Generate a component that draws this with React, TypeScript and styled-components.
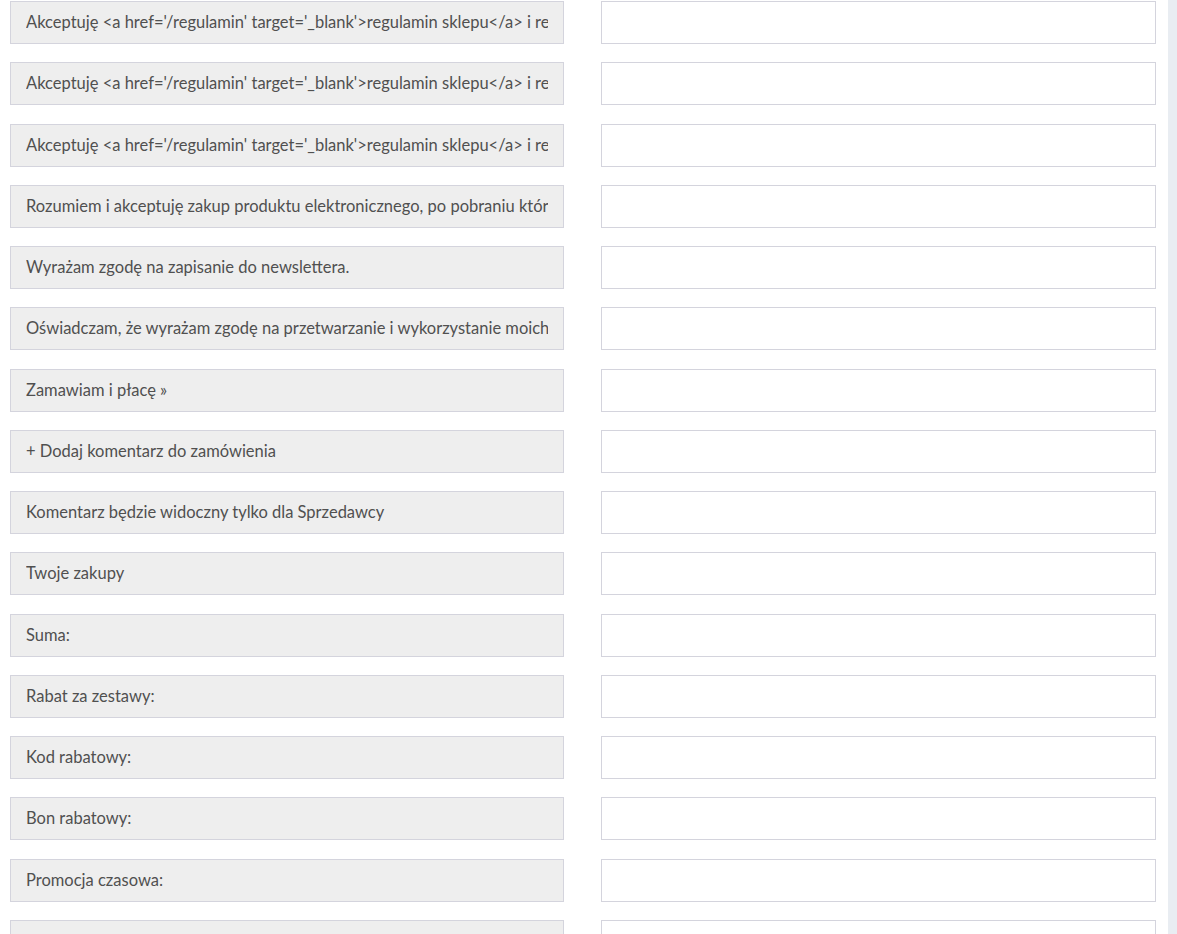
import { Fragment } from 'react';
import styled, { createGlobalStyle } from 'styled-components';

const GlobalStyle = createGlobalStyle`
  html, body {
    margin: 0;
    padding: 0;
    background: #ffffff;
    overflow: hidden;
  }
  body {
    font-family: Lato, "Open Sans", sans-serif;
  }
`;

const Page = styled.div`
  display: flex;
  width: 1177px;
  height: 934px;
  overflow: hidden;
`;

const Content = styled.div`
  flex: 1;
  padding: 1px 12px 0 10px;
  display: grid;
  grid-template-columns: 554px 555px;
  column-gap: 37px;
  row-gap: 18.27px;
  align-content: start;
`;

const ScrollStrip = styled.div`
  width: 9px;
  background-color: #e9edf2;
`;

const Label = styled.div`
  box-sizing: border-box;
  height: 43px;
  padding: 0 15px 1px;
  display: flex;
  align-items: center;

  background-color: #eeeeee;
  border: 1px solid #d4d4dd;
  color: #505050;
  font-size: 16.5px;
`;

// the label text is cut at the padding edge, as on the live page
const LabelText = styled.span`
  display: block;
  width: 100%;
  overflow: hidden;
  white-space: nowrap;
`;

const Field = styled.div`
  box-sizing: border-box;
  height: 43px;
  background-color: #ffffff;
  border: 1px solid #d4d4dd;
`;

const labels = [
  "Akceptuję <a href='/regulamin' target='_blank'>regulamin sklepu</a> i regulamin promocji",
  "Akceptuję <a href='/regulamin' target='_blank'>regulamin sklepu</a> i regulamin promocji",
  "Akceptuję <a href='/regulamin' target='_blank'>regulamin sklepu</a> i regulamin promocji",
  'Rozumiem i akceptuję zakup produktu elektronicznego, po pobraniu którego tracę prawo odstąpienia',
  'Wyrażam zgodę na zapisanie do newslettera.',
  'Oświadczam, że wyrażam zgodę na przetwarzanie i wykorzystanie moich danych osobowych',
  'Zamawiam i płacę »',
  '+ Dodaj komentarz do zamówienia',
  'Komentarz będzie widoczny tylko dla Sprzedawcy',
  'Twoje zakupy',
  'Suma:',
  'Rabat za zestawy:',
  'Kod rabatowy:',
  'Bon rabatowy:',
  'Promocja czasowa:',
  '',
];

export default function App() {
  return (
    <>
      <GlobalStyle />
      <Page>
        <Content>
          {labels.map((text, i) => (
            <Fragment key={i}>
              <Label>
                <LabelText>{text}</LabelText>
              </Label>
              <Field />
            </Fragment>
          ))}
        </Content>
        <ScrollStrip />
      </Page>
    </>
  );
}
